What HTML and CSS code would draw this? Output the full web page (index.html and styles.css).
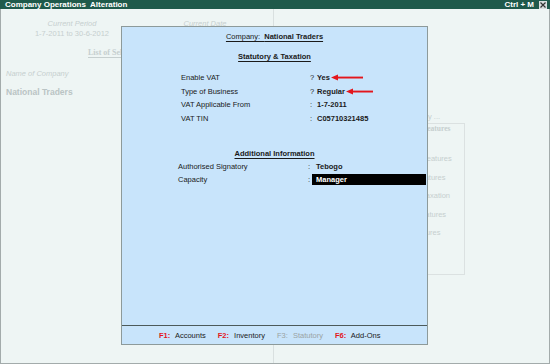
FILE: index.html
```html
<!DOCTYPE html>
<html lang="en">
<head>
    <meta charset="UTF-8">
    <title>Company Operations Alteration</title>
    <link rel="stylesheet" href="styles.css">
</head>
<body>
    <div class="screen">
        <div class="titlebar">
            <span class="title">Company Operations&nbsp; Alteration</span>
            <span class="shortcut">Ctrl + M</span>
            <span class="close">
                <svg width="8" height="8" viewBox="0 0 8 8"><path d="M1.5 1.5 L6.5 6.5 M6.5 1.5 L1.5 6.5" stroke="#333" stroke-width="1.2"/></svg>
            </span>
        </div>

        <div class="backdrop">
            <div class="pane left-pane">
                <div class="period-row">
                    <div class="period-cell">
                        <div class="caption">Current Period</div>
                        <div class="plain">1-7-2011 to 30-6-2012</div>
                    </div>
                    <div class="period-cell date-cell">
                        <div class="caption">Current Date</div>
                    </div>
                </div>
                <div class="list-title">List of Selected Companies</div>
                <div class="company-label">Name of Company</div>
                <div class="company-name">National Traders</div>
            </div>
            <div class="pane right-pane">
                <div class="hint">Modify Quickly ...</div>
                <div class="features">
                    <div class="features-title">Company Features</div>
                    <ul class="features-list">
                        <li>Accounting Features</li>
                        <li>Inventory Features</li>
                        <li>Statutory &amp; Taxation</li>
                        <li>Tally.NET Features</li>
                        <li>Add-On Features</li>
                    </ul>
                </div>
            </div>

            <div class="dialog">
                <div class="dialog-body">
                    <div class="company-head">Company:&nbsp; <b>National Traders</b></div>
                    <div class="section-head">Statutory &amp; Taxation</div>
                    <div class="fields">
                        <div class="row">
                            <span class="label">Enable VAT</span>
                            <span class="mark">?</span>
                            <span class="value">Yes
                                <svg class="arrow" width="32" height="7" viewBox="0 0 32 7"><path d="M0 3.5 L7 0.5 L7 6.5 Z" fill="#e3161c"/><rect x="6" y="2.6" width="26" height="1.9" fill="#e3161c"/></svg>
                            </span>
                        </div>
                        <div class="row">
                            <span class="label">Type of Business</span>
                            <span class="mark">?</span>
                            <span class="value">Regular
                                <svg class="arrow" width="27" height="7" viewBox="0 0 27 7"><path d="M0 3.5 L7 0.5 L7 6.5 Z" fill="#e3161c"/><rect x="6" y="2.6" width="21" height="1.9" fill="#e3161c"/></svg>
                            </span>
                        </div>
                        <div class="row">
                            <span class="label">VAT Applicable From</span>
                            <span class="mark">:</span>
                            <span class="value">1-7-2011</span>
                        </div>
                        <div class="row">
                            <span class="label">VAT TIN</span>
                            <span class="mark">:</span>
                            <span class="value">C05710321485</span>
                        </div>
                    </div>

                    <div class="section-head additional">Additional Information</div>
                    <div class="fields extra">
                        <div class="row">
                            <span class="label">Authorised Signatory</span>
                            <span class="mark">:</span>
                            <span class="value">Tebogo</span>
                        </div>
                        <div class="row">
                            <span class="label">Capacity</span>
                            <span class="mark">:</span>
                            <span class="value active">Manager</span>
                        </div>
                    </div>
                </div>
                <div class="dialog-footer">
                    <span class="key"><b>F1:</b> Accounts</span>
                    <span class="key"><b>F2:</b> Inventory</span>
                    <span class="key off"><b>F3:</b> Statutory</span>
                    <span class="key"><b>F6:</b> Add-Ons</span>
                </div>
            </div>
        </div>
    </div>
</body>
</html>
```

FILE: styles.css
```css
body {
    margin: 0;
    padding: 0;
    background-color: #eef5f4;
    font-family: "Liberation Sans", Arial, sans-serif;
    font-size: 7.5px;
    color: #1a1a1a;
}
.screen {
    width: 550px;
    height: 364px;
    display: flex;
    flex-direction: column;
    overflow: hidden;
}
.titlebar {
    height: 9px;
    background-color: #1f5a4b;
    color: white;
    font-weight: bold;
    font-size: 8px;
    line-height: 9px;
    display: flex;
    align-items: center;
    padding-left: 5px;
    padding-right: 3px;
}
.title {
    flex: 1;
}
.shortcut {
    margin-right: 5px;
}
.close {
    width: 8px;
    height: 8px;
    background-color: #d9dede;
    display: flex;
}
.backdrop {
    flex: 1;
    position: relative;
    display: grid;
    grid-template-columns: 273px 1fr;
    border-left: 1px solid #a3abab;
    border-right: 1px solid #a3abab;
    border-bottom: 1px solid #a3abab;
    color: #c6cfcf;
}
.left-pane {
    border-right: 1px solid #d9e0e0;
}
.period-row {
    display: grid;
    grid-template-columns: 142px 124px;
    padding-top: 10px;
    line-height: 10px;
    text-align: center;
}
.caption {
    font-style: italic;
}
.list-title {
    margin: 9px 0 0 87px;
    font-family: "Liberation Serif", serif;
    font-weight: bold;
    font-size: 8px;
    text-decoration: underline;
    text-underline-offset: 2px;
    white-space: nowrap;
}
.company-label {
    margin: 12px 0 0 5px;
    font-style: italic;
}
.company-name {
    margin: 9px 0 0 5px;
    font-weight: bold;
    font-size: 8.5px;
    color: #bac4c4;
}
.right-pane {
    padding: 103px 0 0 101px;
}
.hint {
    padding-left: 8px;
    line-height: 10px;
}
.features {
    margin-top: 1px;
    width: 90px;
    height: 152px;
    box-sizing: border-box;
    border: 1px solid #dbe1e1;
}
.features-title {
    text-align: center;
    font-family: "Liberation Serif", serif;
    font-weight: bold;
    font-size: 7.5px;
    line-height: 10px;
}
.features-list {
    list-style: none;
    margin: 20px 0 0;
    padding: 0 0 0 7px;
    line-height: 10px;
}
.features-list li {
    margin-bottom: 8.6px;
}
.dialog {
    position: absolute;
    left: 120px;
    top: 17px;
    width: 307px;
    height: 319px;
    box-sizing: border-box;
    border: 1px solid #8d9a9a;
    background-color: #c8e4fb;
    color: #1a1a1a;
    display: flex;
    flex-direction: column;
}
.dialog-body {
    flex: 1;
    padding-top: 4px;
}
.company-head,
.section-head {
    text-align: center;
    line-height: 12px;
    text-decoration: underline;
    text-underline-offset: 2px;
}
.section-head {
    margin-top: 8px;
    font-weight: bold;
}
.section-head.additional {
    margin-top: 22.5px;
}
.fields {
    margin-top: 8px;
    padding-left: 59px;
}
.fields.extra {
    margin-top: 0;
    padding-left: 56px;
}
.row {
    display: flex;
    height: 13.5px;
    align-items: center;
}
.label {
    width: 129px;
}
.mark {
    width: 7px;
}
.value {
    flex: 1;
    font-weight: bold;
    display: flex;
    align-items: center;
}
.arrow {
    margin-left: 1px;
}
.extra .label {
    width: 130px;
}
.extra .mark {
    width: 4px;
}
.extra .value {
    padding-left: 4px;
    margin-right: 1px;
    height: 11px;
}
.value.active {
    background-color: black;
    color: white;
}
.dialog-footer {
    height: 18px;
    border-top: 1px solid #4c5a5a;
    display: flex;
    align-items: center;
    gap: 12px;
    padding-left: 37px;
}
.key b {
    color: #e3161c;
    margin-right: 3px;
}
.key.off,
.key.off b {
    color: #9aa3a3;
    font-weight: normal;
}
```
